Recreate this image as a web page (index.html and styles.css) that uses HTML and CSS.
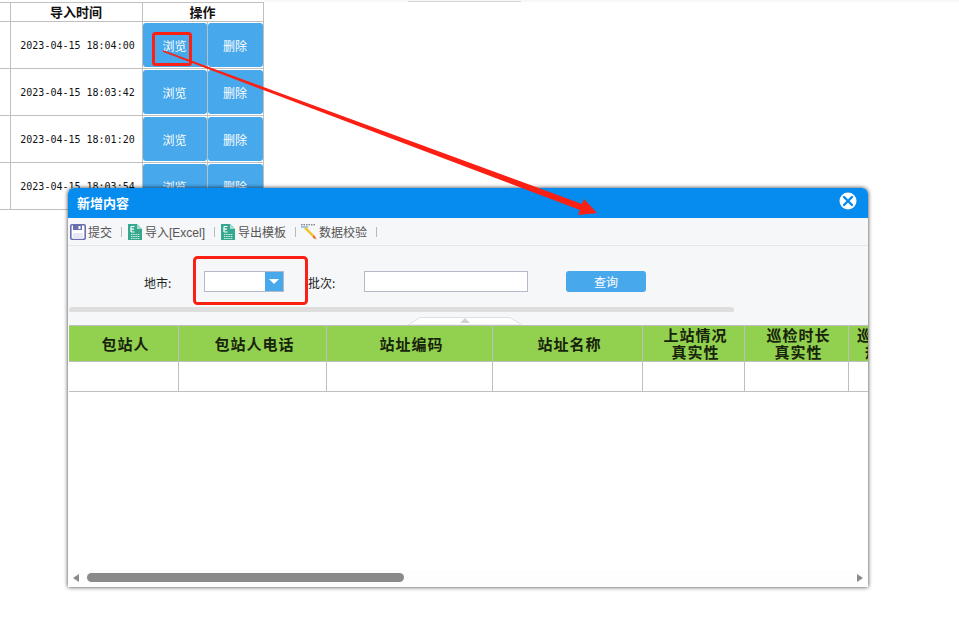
FILE: index.html
```html
<!DOCTYPE html>
<html lang="en">
<head>
    <meta charset="UTF-8">
    <meta name="viewport" content="width=device-width, initial-scale=1.0">
    <title>新增内容</title>
    <link rel="stylesheet" href="styles.css">
</head>
<body>
    <div class="top-band"><div class="top-tab"></div></div>

    <table class="data-table">
        <colgroup>
            <col class="col-cut">
            <col class="col-time">
            <col class="col-view">
            <col class="col-del">
        </colgroup>
        <thead>
            <tr>
                <th></th>
                <th>导入时间</th>
                <th colspan="2">操作</th>
            </tr>
        </thead>
        <tbody>
            <tr>
                <td></td>
                <td class="time">2023-04-15 18:04:00</td>
                <td><button class="row-btn">浏览</button></td>
                <td><button class="row-btn">删除</button></td>
            </tr>
            <tr>
                <td></td>
                <td class="time">2023-04-15 18:03:42</td>
                <td><button class="row-btn">浏览</button></td>
                <td><button class="row-btn">删除</button></td>
            </tr>
            <tr>
                <td></td>
                <td class="time">2023-04-15 18:01:20</td>
                <td><button class="row-btn">浏览</button></td>
                <td><button class="row-btn">删除</button></td>
            </tr>
            <tr>
                <td></td>
                <td class="time">2023-04-15 18:03:54</td>
                <td><button class="row-btn">浏览</button></td>
                <td><button class="row-btn">删除</button></td>
            </tr>
        </tbody>
    </table>

    <!-- Dialog window -->
    <div class="dialog">
        <div class="dialog-title">
            <span>新增内容</span>
            <svg class="close-icon" width="18" height="18" viewBox="0 0 18 18">
                <circle cx="9" cy="9" r="8.5" fill="#fff"/>
                <path d="M5 5L13 13M13 5L5 13" stroke="#068bee" stroke-width="2.4" stroke-linecap="round"/>
            </svg>
        </div>

        <div class="toolbar">
            <span class="tool">
                <svg width="16" height="16" viewBox="0 0 16 16">
                    <rect x="0.8" y="0.8" width="14.4" height="14.4" rx="1" fill="#fff" stroke="#6a6fb0" stroke-width="1.6"/>
                    <rect x="3" y="1" width="9" height="5" fill="#6a6fb0"/>
                    <rect x="8.5" y="2" width="2" height="3" fill="#fff"/>
                    <rect x="3" y="9" width="10" height="6" fill="#e8e8f4"/>
                </svg>
                提交
            </span>
            <i class="tool-sep"></i>
            <span class="tool">
                <svg width="16" height="16" viewBox="0 0 16 16">
                    <path d="M1 0H10L15 5V16H1Z" fill="#36a88e"/>
                    <path d="M10 0L15 5H10Z" fill="#a5dccf"/>
                    <path d="M4 2.5H7.5M4 2.5V8M4 5.2H7M4 8H7.5" stroke="#fff" stroke-width="1.2" fill="none"/>
                    <path d="M4 10.5H13M4 12.5H13M4 14.5H13" stroke="#c5ebe2" stroke-width="1" stroke-dasharray="1.5 0.7"/>
                </svg>
                导入[Excel]
            </span>
            <i class="tool-sep"></i>
            <span class="tool">
                <svg width="16" height="16" viewBox="0 0 16 16">
                    <path d="M1 0H10L15 5V16H1Z" fill="#36a88e"/>
                    <path d="M10 0L15 5H10Z" fill="#a5dccf"/>
                    <path d="M4 2.5H7.5M4 2.5V8M4 5.2H7M4 8H7.5" stroke="#fff" stroke-width="1.2" fill="none"/>
                    <path d="M4 10.5H13M4 12.5H13M4 14.5H13" stroke="#c5ebe2" stroke-width="1" stroke-dasharray="1.5 0.7"/>
                </svg>
                导出模板
            </span>
            <i class="tool-sep"></i>
            <span class="tool">
                <svg width="16" height="16" viewBox="0 0 16 16">
                    <path d="M0 0.8H14" stroke="#555" stroke-width="1" stroke-dasharray="1.5 1"/>
                    <path d="M0 3H7" stroke="#4a90d9" stroke-width="1.2"/>
                    <path d="M3 4.5L5 3L14 12L12.5 14Z" fill="#f2c230"/>
                    <path d="M12 11L14 12.5L15.5 15.5L12 14Z" fill="#f0603a"/>
                </svg>
                数据校验
            </span>
            <i class="tool-sep"></i>
        </div>

        <div class="search-form">
            <label class="field-label city-label">地市:</label>
            <div class="combo">
                <span class="combo-text"></span>
                <span class="combo-arrow"></span>
            </div>
            <label class="field-label batch-label">批次:</label>
            <input class="batch-input" type="text">
            <button class="query-btn">查询</button>
        </div>

        <div class="form-bar"></div>
        <div class="collapse-wrap">
            <svg class="collapse-tab" width="114" height="8" viewBox="0 0 114 8">
                <path d="M0 8L12 0.5H102L114 8Z" fill="#fff" stroke="#e0e0e0" stroke-width="1"/>
                <path d="M52 6L57 1L62 6Z" fill="#d2d2d2"/>
            </svg>
        </div>

        <div class="grid-area">
            <table class="grid-table">
                <thead>
                    <tr>
                        <th class="g1">包站人</th>
                        <th class="g2">包站人电话</th>
                        <th class="g3">站址编码</th>
                        <th class="g4">站址名称</th>
                        <th class="g5">上站情况<br>真实性</th>
                        <th class="g6">巡检时长<br>真实性</th>
                        <th class="g7">巡检时长<br>规范性</th>
                    </tr>
                </thead>
                <tbody>
                    <tr>
                        <td></td><td></td><td></td><td></td><td></td><td></td><td></td>
                    </tr>
                </tbody>
            </table>
        </div>

        <div class="h-scroll">
            <span class="scroll-arrow arrow-left"></span>
            <div class="scroll-track"><div class="scroll-thumb"></div></div>
            <span class="scroll-arrow arrow-right"></span>
        </div>
    </div>

    <!-- Red annotations drawn on top of the screenshot -->
    <svg class="notes" width="959" height="627" viewBox="0 0 959 627">
        <rect x="153.5" y="33.5" width="37" height="31" rx="2" fill="none" stroke="#fb1f14" stroke-width="3"/>
        <rect x="194.5" y="257.5" width="112" height="46" rx="3" fill="none" stroke="#fb1f14" stroke-width="3"/>
        <path d="M163.3 50.2L582 204L584 199L597 213L578 215L580 210L162.7 51.8Z" fill="#fb1f14"/>
    </svg>
</body>
</html>
```

FILE: styles.css
```css
html, body {
    margin: 0;
    padding: 0;
}

body {
    position: relative;
    width: 959px;
    height: 627px;
    overflow: hidden;
    background-color: #fff;
    font-family: "Liberation Sans", "Noto Sans CJK SC", sans-serif;
    font-size: 12px;
    color: #333;
}

.top-band {
    position: absolute;
    left: 264px;
    right: 0;
    top: 0;
    height: 2px;
    background-color: #f7f7f7;
}

.top-tab {
    position: absolute;
    left: 144px;
    top: 1px;
    width: 113px;
    height: 1px;
    background-color: #d4d4d4;
}

/* Background table */
.data-table {
    margin-top: 2px;
    width: 263px;
    table-layout: fixed;
    border-collapse: collapse;
    background-color: #fff;
}

.data-table th,
.data-table td {
    border: 1px solid #bfbfbf;
    padding: 0;
    text-align: center;
}

.data-table th:first-child,
.data-table td:first-child {
    border-left: none;
}

.data-table th {
    height: 18px;
    font-family: "Noto Sans CJK SC", sans-serif;
    font-size: 13px;
    line-height: 18px;
    font-weight: 700;
    color: #111;
}

.data-table td {
    height: 46px;
}

.col-cut { width: 10px; }
.col-time { width: 132px; }
.col-view { width: 65px; }
.col-del { width: 56px; }

.data-table td.time {
    padding-left: 3px;
    font-family: "DejaVu Sans Mono", monospace;
    font-size: 10px;
    color: #111;
}

.row-btn {
    display: block;
    width: 100%;
    height: 44px;
    border: none;
    border-radius: 3px;
    background-color: #47a8ec;
    color: #fff;
    font-family: "Noto Sans CJK SC", sans-serif;
    font-size: 12px;
    padding: 0;
}

/* Dialog */
.dialog {
    position: absolute;
    left: 68px;
    top: 188px;
    width: 800px;
    height: 399px;
    display: flex;
    flex-direction: column;
    background-color: #fff;
    border-radius: 6px 6px 0 0;
    box-shadow: 0 0 4px rgba(0, 0, 0, 0.8);
    overflow: hidden;
}

.dialog-title {
    flex: none;
    box-sizing: border-box;
    height: 30px;
    display: flex;
    align-items: center;
    justify-content: space-between;
    padding: 0 11px 2px 9px;
    background-color: #068bee;
    color: #fff;
    font-family: "Noto Sans CJK SC", sans-serif;
    font-size: 13px;
    font-weight: 700;
}

.close-icon {
    margin-top: -2px;
}

.toolbar {
    flex: none;
    height: 27px;
    display: flex;
    align-items: center;
    padding-left: 2px;
    background-color: #f6f7f9;
    border-bottom: 1px solid #e6e7ea;
    color: #555;
}

.tool {
    display: flex;
    align-items: center;
    gap: 2px;
}

.tool-sep {
    width: 1px;
    height: 10px;
    margin: 0 5px 0 9px;
    background-color: #bbb;
}

.search-form {
    flex: none;
    height: 25px;
    padding-top: 25px;
    display: flex;
    align-items: flex-start;
    background-color: #f6f7f9;
    font-family: "Noto Sans CJK SC", sans-serif;
}

.field-label {
    line-height: 24px;
    color: #222;
}

.city-label {
    margin-left: 76px;
    width: 60px;
}

.combo {
    display: flex;
    width: 78px;
    height: 19px;
    border: 1px solid #b4b8c8;
    background-color: #fff;
}

.combo-text {
    flex: 1;
}

.combo-arrow {
    position: relative;
    width: 18px;
    background-color: #47a8ec;
}

.combo-arrow::after {
    content: "";
    position: absolute;
    left: 4px;
    top: 7px;
    border-left: 5px solid transparent;
    border-right: 5px solid transparent;
    border-top: 5px solid #fff;
}

.batch-label {
    margin-left: 24px;
    width: 56px;
}

.batch-input {
    box-sizing: border-box;
    width: 164px;
    height: 21px;
    padding: 0;
    border: 1px solid #b4b8c8;
    background-color: #fff;
}

.query-btn {
    width: 80px;
    height: 21px;
    margin-left: 38px;
    padding: 0;
    border: none;
    border-radius: 3px;
    background-color: #47a8ec;
    color: #fff;
    font-family: "Noto Sans CJK SC", sans-serif;
    font-size: 12px;
}

.form-bar {
    flex: none;
    position: relative;
    height: 16px;
    background-color: #f6f7f9;
}

.form-bar::before {
    content: "";
    position: absolute;
    left: 1px;
    top: 11px;
    width: 665px;
    height: 6px;
    border-radius: 3px;
    background-color: #dedede;
}

.collapse-wrap {
    flex: none;
    position: relative;
    height: 13px;
    background-color: #f6f7f9;
}

.collapse-tab {
    position: absolute;
    left: 340px;
    bottom: 0;
}

.grid-area {
    flex: 1;
    overflow: hidden;
    margin-left: 1px;
}

.grid-table {
    width: 850px;
    table-layout: fixed;
    border-collapse: collapse;
}

.grid-table th,
.grid-table td {
    border: 1px solid #bfbfbf;
    padding: 0;
    text-align: center;
}

.grid-table th:first-child,
.grid-table td:first-child {
    border-left: none;
}

.grid-table th {
    height: 34px;
    padding: 0 0 1px 4px;
    background-color: #92d050;
    font-family: "Noto Sans CJK SC", sans-serif;
    font-size: 15px;
    line-height: 17px;
    letter-spacing: 1px;
    font-weight: 700;
    color: #17230a;
}

.grid-table td {
    height: 29px;
}

/* widths leave room for the 4px left padding of the header cells */
.g1 { width: 105px; }
.g2 { width: 143px; }
.g3 { width: 161px; }
.g4 { width: 145px; }
.g5 { width: 97px; }
.g6 { width: 99px; }
.g7 { width: 72px; }

.h-scroll {
    flex: none;
    height: 15px;
    display: flex;
    align-items: center;
    padding: 0 5px 2px;
    background-color: #fdfdfd;
}

.scroll-track {
    flex: 1;
    height: 9px;
    margin: 0 6px;
}

.scroll-thumb {
    width: 317px;
    height: 9px;
    margin-left: 2px;
    border-radius: 5px;
    background-color: #8a8a8a;
}

.scroll-arrow {
    width: 0;
    height: 0;
    border-top: 4px solid transparent;
    border-bottom: 4px solid transparent;
}

.arrow-left {
    border-right: 6px solid #8a8a8a;
}

.arrow-right {
    border-left: 6px solid #8a8a8a;
}

/* Red marks over everything */
.notes {
    position: absolute;
    left: 0;
    top: 0;
    pointer-events: none;
}
```
